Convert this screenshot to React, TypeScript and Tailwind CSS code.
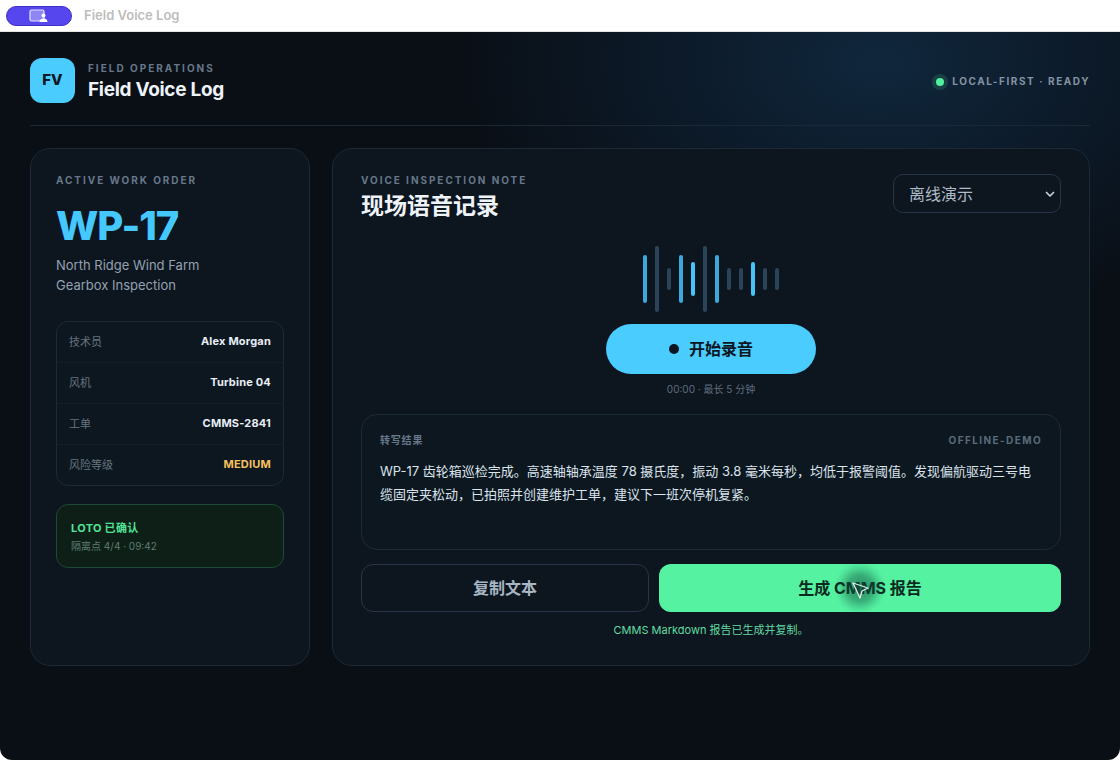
import React from "react";

const bars = [
  { h: 48, c: "bg-[#3ca9da]" },
  { h: 66, c: "bg-[#2a4559]" },
  { h: 22, c: "bg-[#2a4559]" },
  { h: 48, c: "bg-[#3ca9da]" },
  { h: 34, c: "bg-[#46c4f8]" },
  { h: 66, c: "bg-[#2a4559]" },
  { h: 48, c: "bg-[#3ca9da]" },
  { h: 22, c: "bg-[#2a4559]" },
  { h: 22, c: "bg-[#2a4559]" },
  { h: 34, c: "bg-[#46c4f8]" },
  { h: 22, c: "bg-[#2a4559]" },
  { h: 22, c: "bg-[#2a4559]" },
];

const rows = [
  { k: "技术员", v: "Alex Morgan", c: "text-[#e8eef6]" },
  { k: "风机", v: "Turbine 04", c: "text-[#e8eef6]" },
  { k: "工单", v: "CMMS-2841", c: "text-[#e8eef6]" },
  { k: "风险等级", v: "MEDIUM", c: "text-[#f6c15b]" },
];

export default function App() {
  return (
    <div className="h-[760px] w-[1120px] overflow-hidden bg-white font-['Inter','Noto_Sans_CJK_SC',sans-serif]">
      <div className="flex h-[32px] items-center border-b border-[#e4e4e4] bg-white pl-[6px]">
        <div className="flex h-[20px] w-[66px] items-center justify-center rounded-full border border-[#3f30c8] bg-[#5546ee]">
          <svg width="20" height="14" viewBox="0 0 20 14" fill="none">
            <rect x="1" y="1" width="14" height="11" rx="1.5" fill="#8f85f5" stroke="#e6e3ff" strokeWidth="1.2" />
            <circle cx="14.5" cy="6.5" r="2" fill="#ffffff" />
            <path d="M10.5 13c0-2.6 1.8-3.6 4-3.6s4 1 4 3.6z" fill="#ffffff" />
          </svg>
        </div>
        <span className="ml-[12px] text-[13px] font-semibold text-[#bdbdbd]">Field Voice Log</span>
      </div>

      <div className="relative h-[728px] overflow-hidden rounded-b-[12px] bg-[radial-gradient(ellipse_420px_260px_at_880px_30px,#10273c_0%,#0c1a29_50%,#0a0f16_100%)] px-[30px] pt-[26px]">
        <header className="flex h-[68px] items-start justify-between border-b border-[#1a2835]">
          <div className="flex items-center gap-[13px]">
            <div className="flex h-[45px] w-[45px] items-center justify-center rounded-[12px] bg-[#4accff] text-[15px] font-extrabold text-[#0a1622]">FV</div>
            <div className="pt-[2px]">
              <div className="text-[10px] leading-[14px] font-bold tracking-[2px] text-[#66788a]">FIELD OPERATIONS</div>
              <div className="mt-[2px] text-[19px] leading-[26px] font-bold tracking-[-0.3px] text-[#eef3fa]">Field Voice Log</div>
            </div>
          </div>
          <div className="mt-[16px] flex items-center gap-[8px]">
            <span className="h-[8px] w-[8px] rounded-full bg-[#52ef9e] shadow-[0_0_0_4px_rgba(82,239,158,0.14)]" />
            <span className="text-[10px] font-bold tracking-[1.55px] text-[#8593a3]">LOCAL-FIRST · READY</span>
          </div>
        </header>

        <main className="mt-[22px] grid h-[518px] grid-cols-[280px_758px] gap-[22px]">
          <section className="flex flex-col rounded-[20px] border border-[#1c2a37] bg-[#0d151e] px-[25px] pt-[24px]">
            <div className="text-[10px] leading-[14px] font-bold tracking-[1.95px] text-[#66788a]">ACTIVE WORK ORDER</div>
            <div className="mt-[15px] text-[40px] leading-[48px] font-extrabold tracking-[-1.2px] text-[#45c8fd]">WP-17</div>
            <div className="mt-[5px] text-[13px] leading-[20px] text-[#93a2b2]">
              North Ridge Wind Farm
              <br />
              Gearbox Inspection
            </div>
            <div className="mt-[26px] rounded-[12px] border border-[#1c2a37] bg-[#0d1720]">
              {rows.map((r, i) => (
                <div key={r.k} className={`flex items-center justify-between px-[12px] ${i < 3 ? "h-[41px] border-b border-[#131e29]" : "h-[40px]"}`}>
                  <span className="text-[11px] text-[#66747f]">{r.k}</span>
                  <span className={`pb-[2px] text-[11px] leading-[14px] font-bold tracking-[0.2px] ${r.c}`}>{r.v}</span>
                </div>
              ))}
            </div>
            <div className="mt-[18px] h-[64px] rounded-[12px] border border-[#1f4a34] bg-[#0d1f17] px-[14px] pt-[15px]">
              <div className="text-[11px] leading-[16px] font-bold tracking-[0.3px] text-[#52e39a]">LOTO 已确认</div>
              <div className="mt-[3px] text-[10px] leading-[14px] text-[#5f7d70]">隔离点 4/4 · 09:42</div>
            </div>
          </section>

          <section className="flex flex-col rounded-[20px] border border-[#1c2a37] bg-[#0d151e] px-[28px] pt-[25px]">
            <div className="flex items-start justify-between">
              <div>
                <div className="-mt-[1px] text-[10px] leading-[14px] font-bold tracking-[1.95px] text-[#66788a]">VOICE INSPECTION NOTE</div>
                <div className="mt-[4px] text-[23px] leading-[30px] font-bold text-[#eef3fa]">现场语音记录</div>
              </div>
              <div className="flex h-[39px] w-[168px] items-center justify-between rounded-[10px] border border-[#263646] bg-[#0d151e] pr-[4px] pl-[15px]">
                <span className="text-[16px] text-[#aebbc8]">离线演示</span>
                <svg width="12" height="12" viewBox="0 0 12 12" fill="none">
                  <path d="M2.5 4.5 6 8l3.5-3.5" stroke="#c5d0db" strokeWidth="1.7" strokeLinecap="round" strokeLinejoin="round" />
                </svg>
              </div>
            </div>

            <div className="mt-[25px] flex h-[66px] items-center justify-center gap-[8px]">
              {bars.map((b, i) => (
                <span key={i} className={`w-[4px] rounded-full ${b.c}`} style={{ height: b.h }} />
              ))}
            </div>
            <div className="mt-[12px] flex h-[50px] w-[210px] items-center justify-center gap-[10px] self-center rounded-full bg-[#4accff]">
              <span className="h-[10px] w-[10px] rounded-full bg-[#0b1622]" />
              <span className="text-[16px] font-bold text-[#0b1622]">开始录音</span>
            </div>
            <div className="mt-[8px] text-center text-[10px] leading-[14px] text-[#5f6f7e]">00:00 · 最长 5 分钟</div>

            <div className="mt-[18px] h-[136px] rounded-[16px] border border-[#1c2a37] bg-[#0d1720] px-[18px] pt-[18px]">
              <div className="flex items-center justify-between">
                <span className="text-[10px] leading-[14px] font-semibold tracking-[0.8px] text-[#66788a]">转写结果</span>
                <span className="text-[10px] leading-[14px] font-bold tracking-[1.4px] text-[#5a6b7b]">OFFLINE-DEMO</span>
              </div>
              <p className="mt-[13px] text-[13px] leading-[23.4px] text-[#dbe3ec]">
                WP-17 齿轮箱巡检完成。高速轴轴承温度 78 摄氏度，振动 3.8 毫米每秒，均低于报警阈值。发现偏航驱动三号电缆固定夹松动，已拍照并创建维护工单，建议下一班次停机复紧。
              </p>
            </div>

            <div className="mt-[14px] grid h-[48px] grid-cols-[288px_402px] gap-[10px]">
              <div className="flex items-center justify-center rounded-[12px] border border-[#263646] text-[16px] font-bold text-[#a8b6c4]">复制文本</div>
              <div className="flex items-center justify-center rounded-[12px] bg-[#55f2a2] text-[16px] font-bold text-[#0b2a20]">生成 CMMS 报告</div>
            </div>
            <div className="mt-[10px] text-center text-[11px] leading-[16px] text-[#62dba3]">CMMS Markdown 报告已生成并复制。</div>
          </section>
        </main>

        <div className="absolute top-[530px] left-[834px] h-[52px] w-[52px] rounded-full bg-[radial-gradient(circle,rgba(15,80,62,0.62)_0%,rgba(15,80,62,0.42)_35%,rgba(15,80,62,0.14)_55%,rgba(15,80,62,0)_70%)]" />
        <svg className="absolute top-[550px] left-[852px]" width="18" height="18" viewBox="0 0 18 18" fill="none">
          <path d="M1 1 16 6 10 9 8 16z" fill="rgba(20,70,60,0.55)" stroke="#dcefe7" strokeWidth="1.3" strokeLinejoin="round" />
        </svg>
      </div>
    </div>
  );
}
